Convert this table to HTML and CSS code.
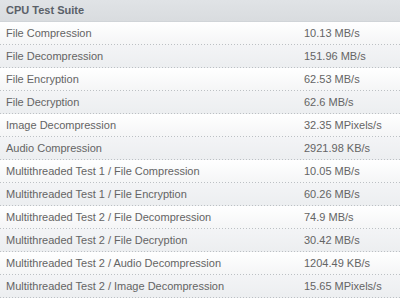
FILE: index.html
```html
<!DOCTYPE html>
<html>
<head>
<meta charset="utf-8">
<link rel="stylesheet" href="styles.css">
</head>
<body>
<div class="suite">
  <div class="head">CPU Test Suite</div>
  <div class="row"><span class="name">File Compression</span><span class="val">10.13 MB/s</span></div>
  <div class="row"><span class="name">File Decompression</span><span class="val">151.96 MB/s</span></div>
  <div class="row"><span class="name">File Encryption</span><span class="val">62.53 MB/s</span></div>
  <div class="row"><span class="name">File Decryption</span><span class="val">62.6 MB/s</span></div>
  <div class="row"><span class="name">Image Decompression</span><span class="val">32.35 MPixels/s</span></div>
  <div class="row"><span class="name">Audio Compression</span><span class="val">2921.98 KB/s</span></div>
  <div class="row"><span class="name">Multithreaded Test 1 / File Compression</span><span class="val">10.05 MB/s</span></div>
  <div class="row"><span class="name">Multithreaded Test 1 / File Encryption</span><span class="val">60.26 MB/s</span></div>
  <div class="row"><span class="name">Multithreaded Test 2 / File Decompression</span><span class="val">74.9 MB/s</span></div>
  <div class="row"><span class="name">Multithreaded Test 2 / File Decryption</span><span class="val">30.42 MB/s</span></div>
  <div class="row"><span class="name">Multithreaded Test 2 / Audio Decompression</span><span class="val">1204.49 KB/s</span></div>
  <div class="row"><span class="name">Multithreaded Test 2 / Image Decompression</span><span class="val">15.65 MPixels/s</span></div>
</div>
</body>
</html>
```
FILE: styles.css
```css
html, body {
  margin: 0;
  padding: 0;
  background: #ffffff;
}
.suite {
  width: 400px;
  font-family: "Liberation Sans", Arial, sans-serif;
  font-size: 11px;
  color: #646464;
}
.head {
  height: 21px;
  line-height: 21px;
  padding-left: 6px;
  font-weight: bold;
  color: #5a6068;
  background: linear-gradient(#e0e3e6, #d9dcdf);
  border-bottom: 1px solid #d0d4d8;
}
.row {
  display: grid;
  grid-template-columns: 298px 1fr;
  box-sizing: border-box;
  height: 23px;
  line-height: 22px;
  padding: 0 0 1px 6px;
  background:
    linear-gradient(to right, #bcc0c4 1px, transparent 1px) left bottom / 3px 1px repeat-x,
    linear-gradient(#ffffff, #f4f5f6);
}
.row:nth-child(odd) {
  background:
    linear-gradient(to right, #bcc0c4 1px, transparent 1px) left bottom / 3px 1px repeat-x,
    linear-gradient(#f3f4f6, #eceef0);
}
.name, .val {
  white-space: nowrap;
}
```
